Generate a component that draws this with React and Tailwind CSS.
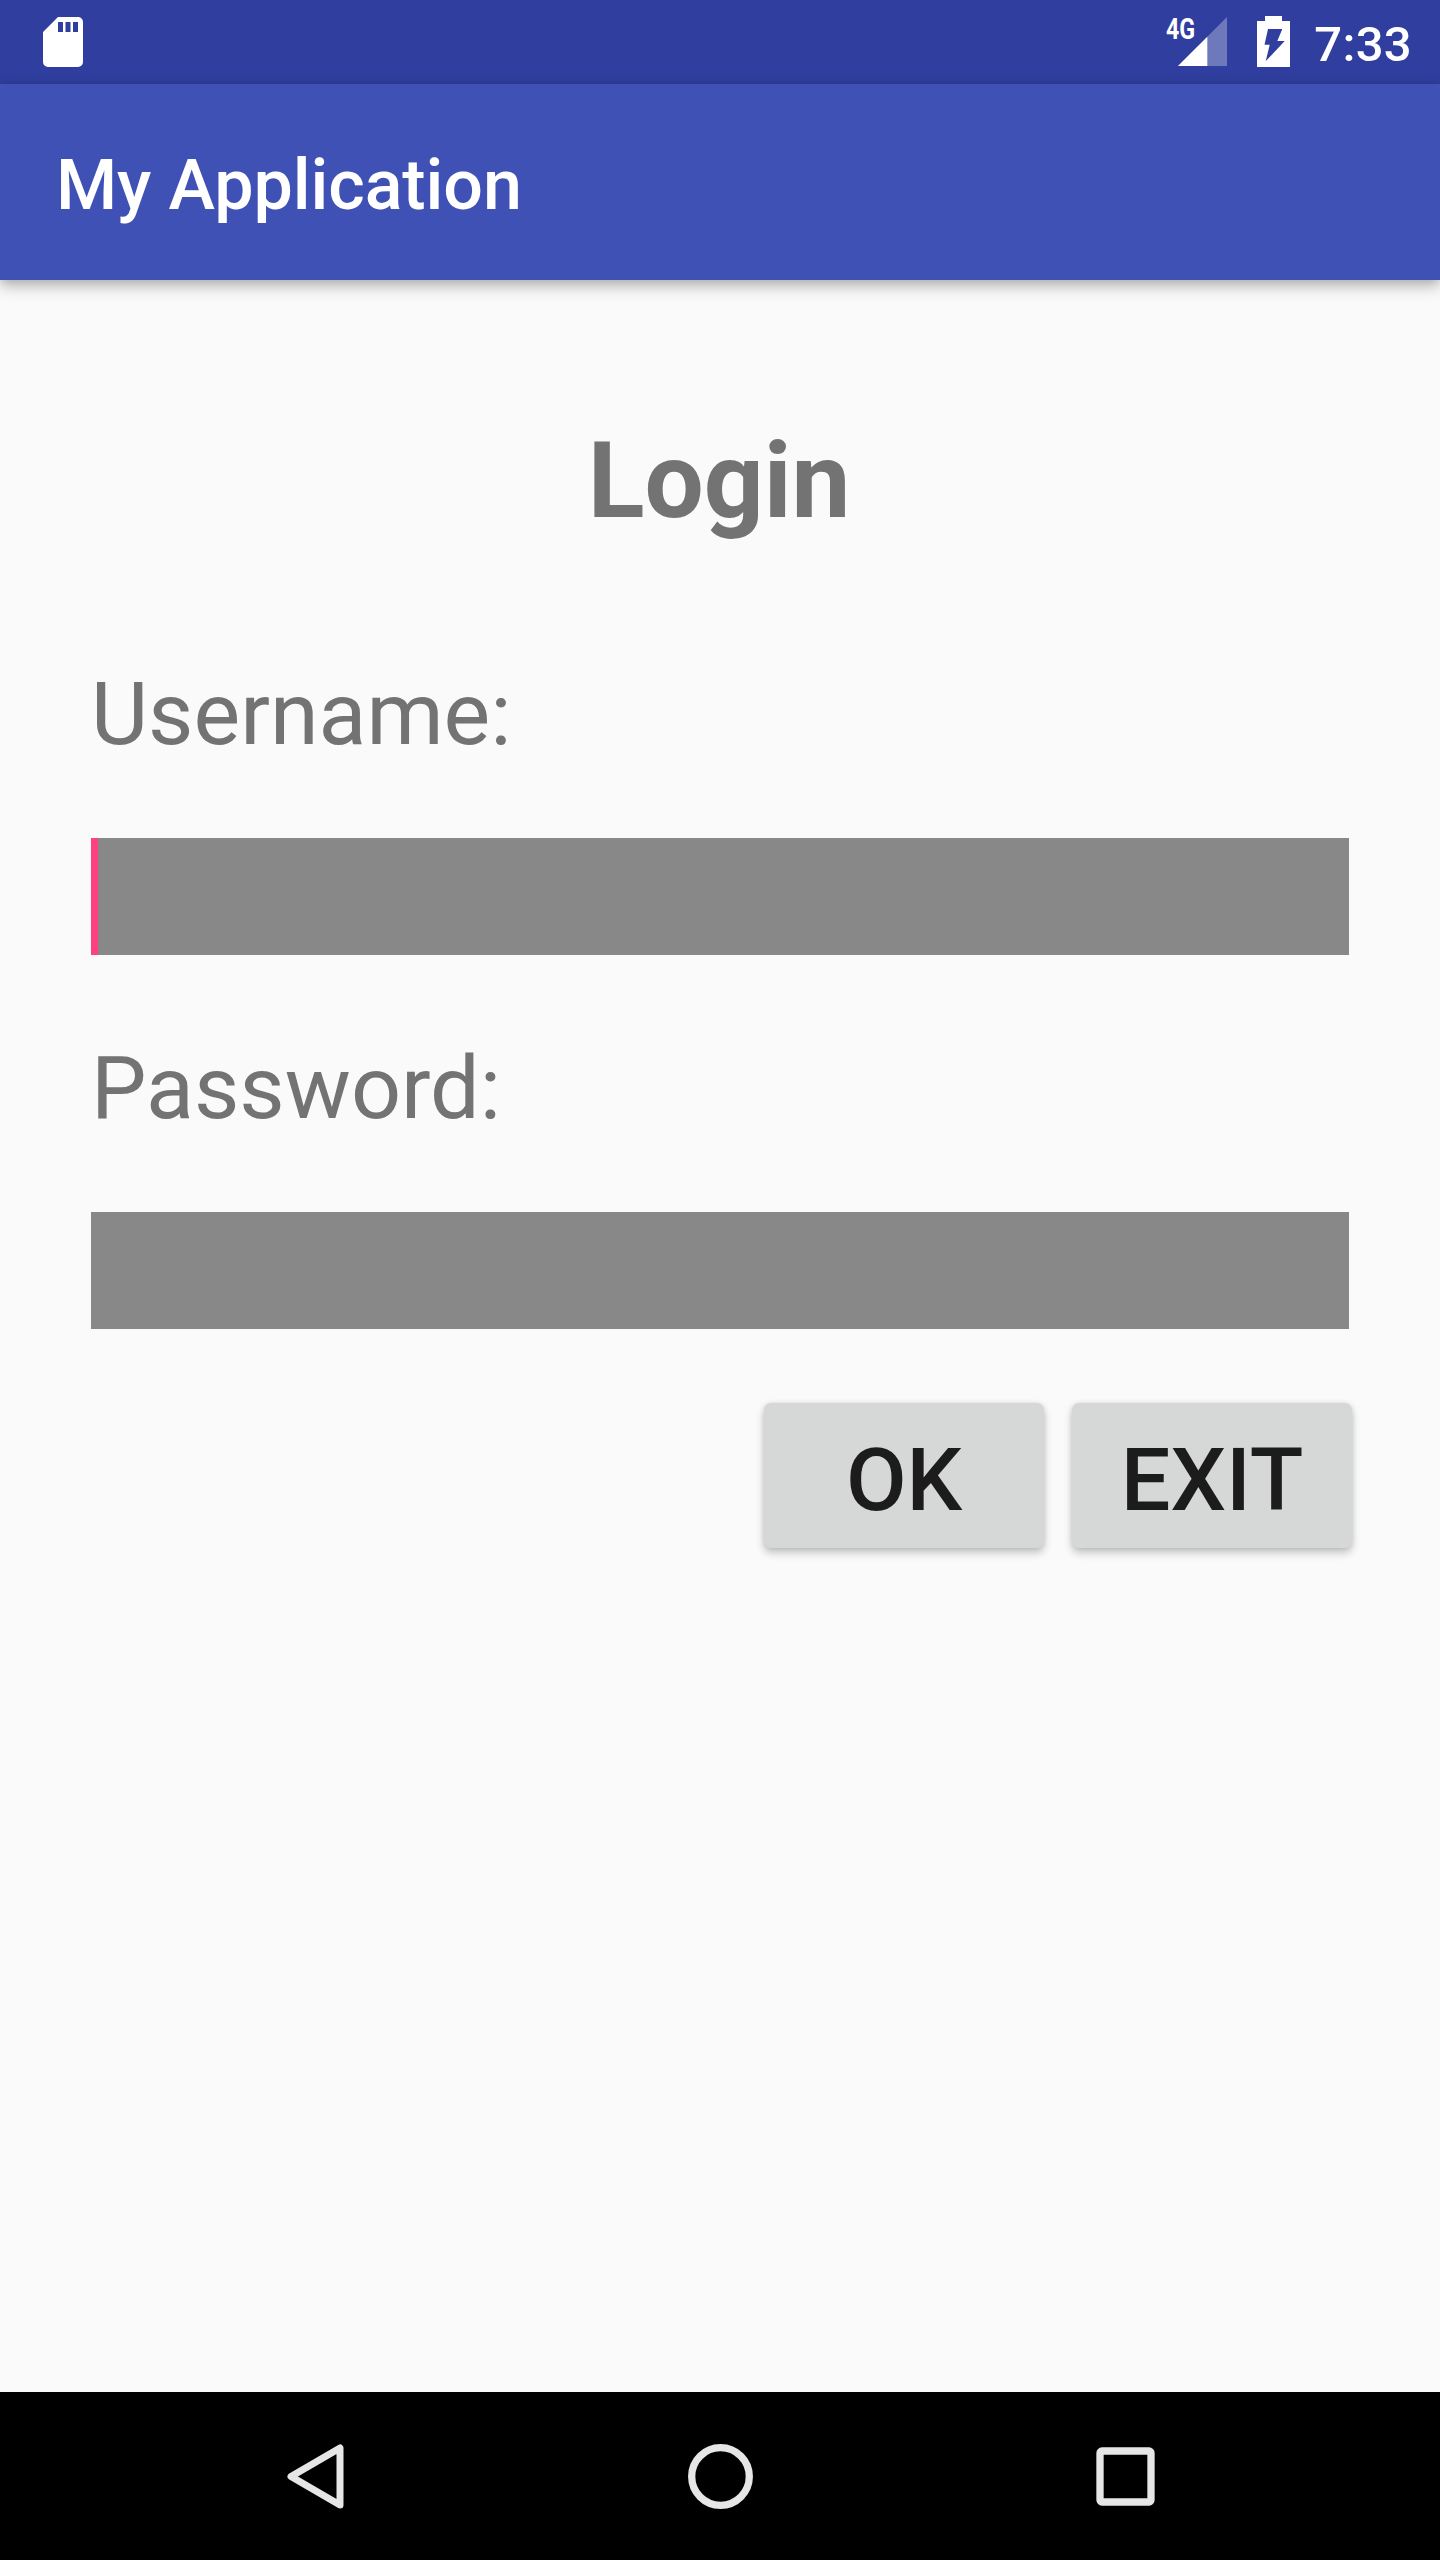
function SdCard() {
  return (
    <svg className="block h-[50px] w-10" viewBox="0 0 40 50" fill="none">
      <path
        fill="#fff"
        fillRule="evenodd"
        d="M15 0H35a5 5 0 0 1 5 5V45a5 5 0 0 1-5 5H5a5 5 0 0 1-5-5V15ZM15 5V15h5V5ZM22.5 5V15h5V5ZM30 5V15h5V5Z"
      />
    </svg>
  );
}

function Signal() {
  return (
    <div className="relative h-[50px] w-[61px]">
      <span className="absolute -top-[4px] left-0 origin-left scale-x-[0.8] text-[29px] leading-[34px] font-bold">4G</span>
      <svg className="absolute right-0 bottom-0 h-[49px] w-[49px]" viewBox="0 0 49 49">
        <path d="M49 0V49H0Z" fill="#fff" fillOpacity="0.3" />
        <path d="M29.3 19.7V49H0Z" fill="#fff" />
      </svg>
    </div>
  );
}

function Battery() {
  return (
    <svg className="block h-[51px] w-[33px]" viewBox="0 0 33 51">
      <path
        fill="#fff"
        fillRule="evenodd"
        d="M8 0H25V5H33V51H0V5H8ZM11 13L7.5 28.8H12.7L8.7 45.3L27.7 25H20.3L25.3 13Z"
      />
    </svg>
  );
}

function Field({ label, focused }) {
  return (
    <label className="block">
      <span className="block h-[103px] text-[88px] leading-[103px]">{label}</span>
      <span className="mt-[73px] flex h-[117px] bg-[#888888]">
        {focused && <span className="w-[7px] bg-[#ff4081]" />}
      </span>
    </label>
  );
}

function Button({ children }) {
  return (
    <button className="flex h-[145px] w-[280px] items-center justify-center rounded-[7px] bg-[#d6d7d7] pt-[8px] text-[88px] leading-none font-medium text-[#1c1c1c] shadow-[0_5px_8px_rgba(0,0,0,0.22),0_0_5px_rgba(0,0,0,0.1)]">
      {children}
    </button>
  );
}

export default function App() {
  return (
    <div className="flex h-[2560px] w-[1440px] flex-col overflow-hidden bg-[#fafafa] font-['Roboto',sans-serif] text-[#737373]">
      <div className="flex h-[84px] items-start justify-between bg-[#303f9f] pr-[28px] pl-[43px] text-white">
        <div className="pt-[17px]">
          <SdCard />
        </div>
        <div className="flex items-start pt-4">
          <Signal />
          <div className="ml-[30px]">
            <Battery />
          </div>
          <span className="ml-[24px] pt-px text-[49px] leading-[56px] font-medium tracking-[0.3px]">7:33</span>
        </div>
      </div>
      <header className="flex h-[196px] items-center bg-[#3f51b5] pt-[7px] pl-14 text-[70px] font-medium tracking-[-0.1px] text-white shadow-[0_6px_14px_rgba(0,0,0,0.28),0_0_8px_rgba(0,0,0,0.1)]">
        My Application
      </header>
      <main className="flex flex-1 flex-col px-[91px] pt-[139px]">
        <h1 className="pr-[2px] text-center text-[105px] leading-[126px] font-bold">Login</h1>
        <form className="mt-[117px] flex flex-col gap-[81px]">
          <Field label="Username:" focused />
          <Field label="Password:" />
        </form>
        <div className="-mr-[3px] mt-[74px] flex justify-end gap-7">
          <Button>OK</Button>
          <Button>EXIT</Button>
        </div>
      </main>
      <nav className="flex h-[168px] items-center justify-between bg-black pr-[285px] pl-[287px]">
        <svg className="h-[65px] w-[57px]" viewBox="0 0 57 65" fill="none" stroke="#e6e6e6" strokeWidth="7" strokeLinejoin="round">
          <path d="M53 4V61L4 32.5Z" />
        </svg>
        <svg className="h-[65px] w-[65px]" viewBox="0 0 65 65" fill="none" stroke="#e6e6e6" strokeWidth="7.3">
          <circle cx="32.5" cy="32.5" r="28.8" />
        </svg>
        <svg className="h-[59px] w-[59px]" viewBox="0 0 59 59" fill="none" stroke="#e6e6e6" strokeWidth="7.3">
          <rect x="4" y="4" width="51" height="51" rx="2" />
        </svg>
      </nav>
    </div>
  );
}
